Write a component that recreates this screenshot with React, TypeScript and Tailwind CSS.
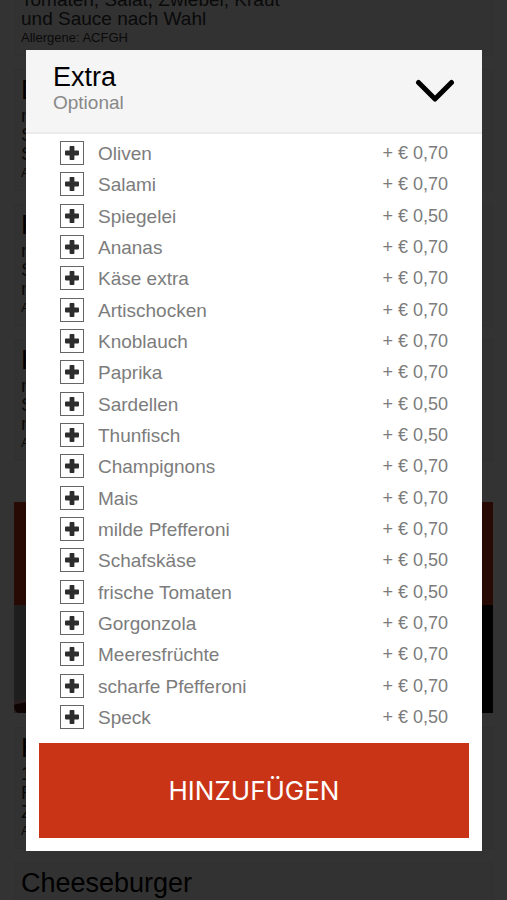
import { useState } from "react";

interface MenuItem {
  name: string;
  lines: string[];
  allergens: string;
}

interface Extra {
  name: string;
  price: string;
}

const topItems: MenuItem[] = [
  { name: "Dürüm", lines: ["mit Tomaten,", "Tomaten, Salat, Zwiebel, Kraut", "und Sauce nach Wahl"], allergens: "ACFGH" },
  { name: "Döner", lines: ["mit Fleisch,", "Salat und", "Sauce"], allergens: "ACFGH" },
  { name: "Kebab", lines: ["mit Fleisch,", "Salat und", "mit Sauce"], allergens: "ACFGH" },
  { name: "Kebab", lines: ["mit Käse,", "Salat und", "mit Sauce"], allergens: "ACFGH" },
];

const burgerItems: MenuItem[] = [
  { name: "Hamburger", lines: ["100g", "Rindfleisch,", "Zwiebel"], allergens: "ACFGH" },
  { name: "Cheeseburger", lines: ["100g", "Rindfleisch,", "Zwiebel"], allergens: "ACFGH" },
];

const extras: Extra[] = [
  { name: "Oliven", price: "0,70" },
  { name: "Salami", price: "0,70" },
  { name: "Spiegelei", price: "0,50" },
  { name: "Ananas", price: "0,70" },
  { name: "Käse extra", price: "0,70" },
  { name: "Artischocken", price: "0,70" },
  { name: "Knoblauch", price: "0,70" },
  { name: "Paprika", price: "0,70" },
  { name: "Sardellen", price: "0,50" },
  { name: "Thunfisch", price: "0,50" },
  { name: "Champignons", price: "0,70" },
  { name: "Mais", price: "0,70" },
  { name: "milde Pfefferoni", price: "0,70" },
  { name: "Schafskäse", price: "0,50" },
  { name: "frische Tomaten", price: "0,50" },
  { name: "Gorgonzola", price: "0,70" },
  { name: "Meeresfrüchte", price: "0,70" },
  { name: "scharfe Pfefferoni", price: "0,70" },
  { name: "Speck", price: "0,50" },
];

function MenuCard({ item }: { item: MenuItem }) {
  return (
    <article className="border border-[#eeeeee] bg-[#f8f8f8] px-1.5 pt-1.5 pb-2">
      <h3 className="text-[27px] leading-7">{item.name}</h3>
      <div className="mt-0.5 text-[19px] leading-[19px] text-[#333333]">
        {item.lines.map((line) => (
          <p key={line} className="whitespace-nowrap">{line}</p>
        ))}
      </div>
      <p className="mt-px text-[13px] leading-[18px] text-[#333333]">Allergene: {item.allergens}</p>
    </article>
  );
}

function MenuPage() {
  return (
    <div className="h-screen overflow-hidden bg-[#fdfdfd] px-3.5">
      <div className="-mt-[66px] flex flex-col gap-[13px]">
        {topItems.map((item, index) => (
          <MenuCard key={index} item={item} />
        ))}
      </div>

      <div className="mt-[41px] h-[103px] bg-[#c83414]" />
      <div className="h-[108px] bg-linear-to-r from-[#999999] to-[#0a0a0a]">
        <svg viewBox="0 0 60 108" className="h-full">
          <path d="M0 96 Q8 94 60 88 V108 H0Z" fill="#c09a96" />
          <path d="M0 100 Q8 96 60 94 V108 H4 Q0 106 0 100Z" fill="#4b1414" />
        </svg>
      </div>

      <div className="mt-3.5 flex flex-col gap-[13px]">
        {burgerItems.map((item) => (
          <MenuCard key={item.name} item={item} />
        ))}
      </div>
    </div>
  );
}

function ExtraRow({ extra }: { extra: Extra }) {
  const [selected, setSelected] = useState(false);

  return (
    <li className="flex items-center">
      <button
        type="button"
        aria-label={`${extra.name} hinzufügen`}
        aria-pressed={selected}
        onClick={() => setSelected(!selected)}
        className="mr-3.5 flex size-6 items-center justify-center border border-[#666666] bg-white"
      >
        <svg viewBox="0 0 14 14" className="size-3.5" fill={selected ? "#c83414" : "#2d2d2d"}>
          <rect x="4.6" y="0" width="4.8" height="14" rx="0.8" />
          <rect x="0" y="4.6" width="14" height="4.8" rx="0.8" />
        </svg>
      </button>
      <span className="flex-1 pt-0.5 text-[19px] leading-[22px]">{extra.name}</span>
      <span className="text-[18px] leading-[22px]">+ € {extra.price}</span>
    </li>
  );
}

function App() {
  const [open, setOpen] = useState(true);

  return (
    <div className="font-['Liberation_Sans',Arial,sans-serif] text-black">
      <MenuPage />

      <div className="fixed inset-0 overflow-y-auto bg-black/80 pt-[50px] pr-[25px] pl-[26px]">
        <div role="dialog" aria-label="Extra" className="bg-white pb-[13px]">
          <button
            type="button"
            aria-expanded={open}
            onClick={() => setOpen(!open)}
            className="flex w-full items-start justify-between border-b-2 border-[#ececec] bg-[#f5f5f5] pt-3 pr-[27px] pb-[18px] pl-[27px] text-left"
          >
            <span>
              <span className="block text-[27px] leading-[30px]">Extra</span>
              <span className="block text-[19px] leading-[22px] text-[#888888]">Optional</span>
            </span>
            <svg viewBox="0 0 40 24" className="mt-[17px] h-6 w-10" fill="none" stroke="black" strokeWidth="5" strokeLinecap="round" strokeLinejoin="round">
              <path d="M3.5 3.5 L20 20 L36.5 3.5" />
            </svg>
          </button>

          {open && (
            <ul className="flex min-h-[595px] flex-col justify-between pt-[7px] pr-[34px] pl-[34px] text-[#7c7c7c]">
              {extras.map((extra) => (
                <ExtraRow key={extra.name} extra={extra} />
              ))}
            </ul>
          )}

          <div className="mt-3.5 px-[13px]">
            <button type="button" className="w-full bg-[#c93416] py-8 font-[Inter,sans-serif] text-[26px] leading-[31px] text-white">
              HINZUFÜGEN
            </button>
          </div>
        </div>
      </div>
    </div>
  );
}

export default App;
